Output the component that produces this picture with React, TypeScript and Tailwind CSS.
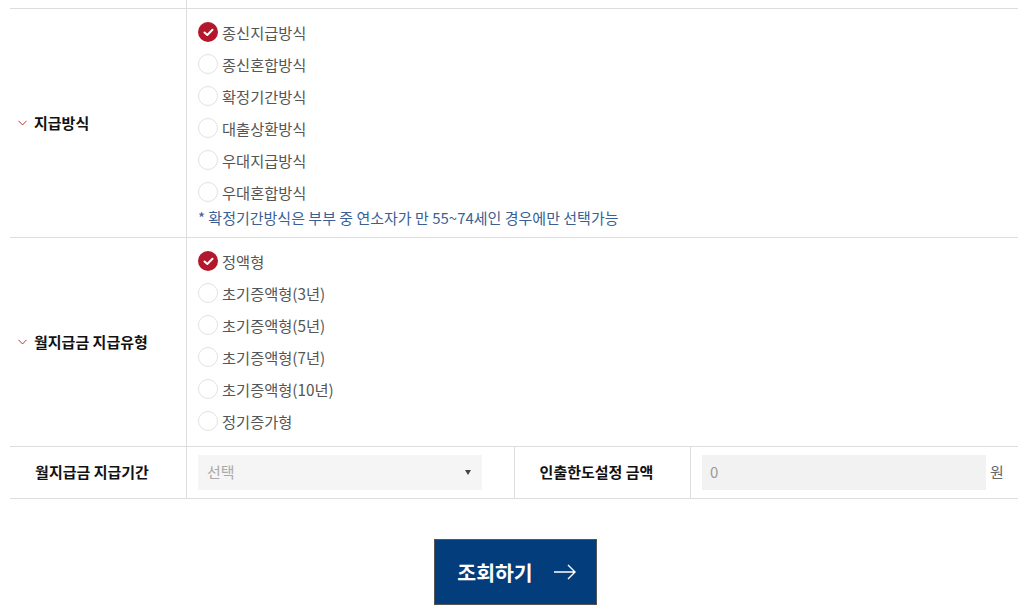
import { useState } from 'react';

const FONT = "font-['Noto_Sans_CJK_KR','Noto_Sans',sans-serif]";

const payMethods = ['종신지급방식', '종신혼합방식', '확정기간방식', '대출상환방식', '우대지급방식', '우대혼합방식'];
const payTypes = ['정액형', '초기증액형(3년)', '초기증액형(5년)', '초기증액형(7년)', '초기증액형(10년)', '정기증가형'];

function Radio({ label, checked, onSelect }: { label: string; checked: boolean; onSelect: () => void }) {
  return (
    <label className="flex h-8 cursor-pointer items-center gap-1" onClick={onSelect}>
      {checked ? (
        <span className="flex h-5 w-5 items-center justify-center rounded-full bg-[#b3172b]">
          <svg width="11" height="9" viewBox="0 0 11 9" fill="none">
            <path d="M1.5 4.5 L4.3 7 L9.5 1.8" stroke="#fff" strokeWidth="2" strokeLinecap="round" strokeLinejoin="round" />
          </svg>
        </span>
      ) : (
        <span className="h-5 w-5 rounded-full border border-[#e2e2e2] bg-white" />
      )}
      <span className="text-[15.3px] leading-5 text-[#555]">{label}</span>
    </label>
  );
}

function RowLabel({ children }: { children: string }) {
  return (
    <div className="flex items-center gap-[7px] border-r border-[#ddd] pl-[8px]">
      <svg width="9" height="6" viewBox="0 0 9 6" fill="none">
        <path d="M0.5 0.8 L4.5 5 L8.5 0.8" stroke="#c0392b" strokeWidth="1" />
      </svg>
      <span className="text-[15px] font-bold text-[#111]">{children}</span>
    </div>
  );
}

export default function App() {
  const [method, setMethod] = useState(0);
  const [type, setType] = useState(0);

  return (
    <div className={`${FONT} min-h-[611px] bg-white px-[10px] pr-[12px]`}>
      {/* tail of the row above */}
      <div className="grid h-2 grid-cols-[177px_1fr]">
        <div className="border-r border-[#ddd]" />
        <div />
      </div>

      <div className="border-t border-[#ddd]">
        <div className="grid grid-cols-[177px_1fr] border-b border-[#ddd]">
          <RowLabel>지급방식</RowLabel>
          <div className="px-[11px] pt-[7px] pb-[9px]">
            {payMethods.map((m, i) => (
              <Radio key={m} label={m} checked={method === i} onSelect={() => setMethod(i)} />
            ))}
            <p className="h-5 text-[15px] leading-5 text-[#3b5f95]">
              * 확정기간방식은 부부 중 연소자가 만 55~74세인 경우에만 선택가능
            </p>
          </div>
        </div>

        <div className="grid grid-cols-[177px_1fr] border-b border-[#ddd]">
          <RowLabel>월지급금 지급유형</RowLabel>
          <div className="px-[11px] pt-[7px] pb-[9px]">
            {payTypes.map((t, i) => (
              <Radio key={t} label={t} checked={type === i} onSelect={() => setType(i)} />
            ))}
          </div>
        </div>

        <div className="grid h-[52px] grid-cols-[177px_328px_176px_1fr] border-b border-[#ddd]">
          <div className="flex items-center justify-center border-r border-[#ddd] pr-3 text-[15px] font-bold text-[#111]">
            월지급금 지급기간
          </div>
          <div className="flex items-center border-r border-[#ddd] pl-[11px]">
            <div className="flex h-[35px] w-[284px] items-center justify-between bg-[#f5f5f5] pl-[9px] pr-[11px]">
              <span className="text-[15px] text-[#aaa]">선택</span>
              <svg width="6" height="5" viewBox="0 0 6 5">
                <path d="M0 0 H6 L3 5 Z" fill="#444" />
              </svg>
            </div>
          </div>
          <div className="flex items-center justify-center border-r border-[#ddd] pr-3 text-[15px] font-bold text-[#111]">
            인출한도설정 금액
          </div>
          <div className="flex items-center gap-[4px] pl-[11px]">
            <div className="flex h-[35px] w-[284px] items-center bg-[#f2f2f2] pl-[8px] text-[15px] text-[#999]">0</div>
            <span className="text-[15px] text-[#666]">원</span>
          </div>
        </div>
      </div>

      <div className="mt-[40px] flex justify-center pl-[2px]">
        <button
          type="button"
          className="flex h-[66px] w-[163px] items-center justify-center gap-[20px] border border-[#555] bg-[#043d7c] pl-[4px] text-white"
        >
          <span className="text-[20.5px] font-bold">조회하기</span>
          <svg width="24" height="16" viewBox="0 0 24 16" fill="none">
            <path d="M1 8 H22 M15 1 L22 8 L15 15" stroke="#fff" strokeWidth="1.4" />
          </svg>
        </button>
      </div>
    </div>
  );
}
